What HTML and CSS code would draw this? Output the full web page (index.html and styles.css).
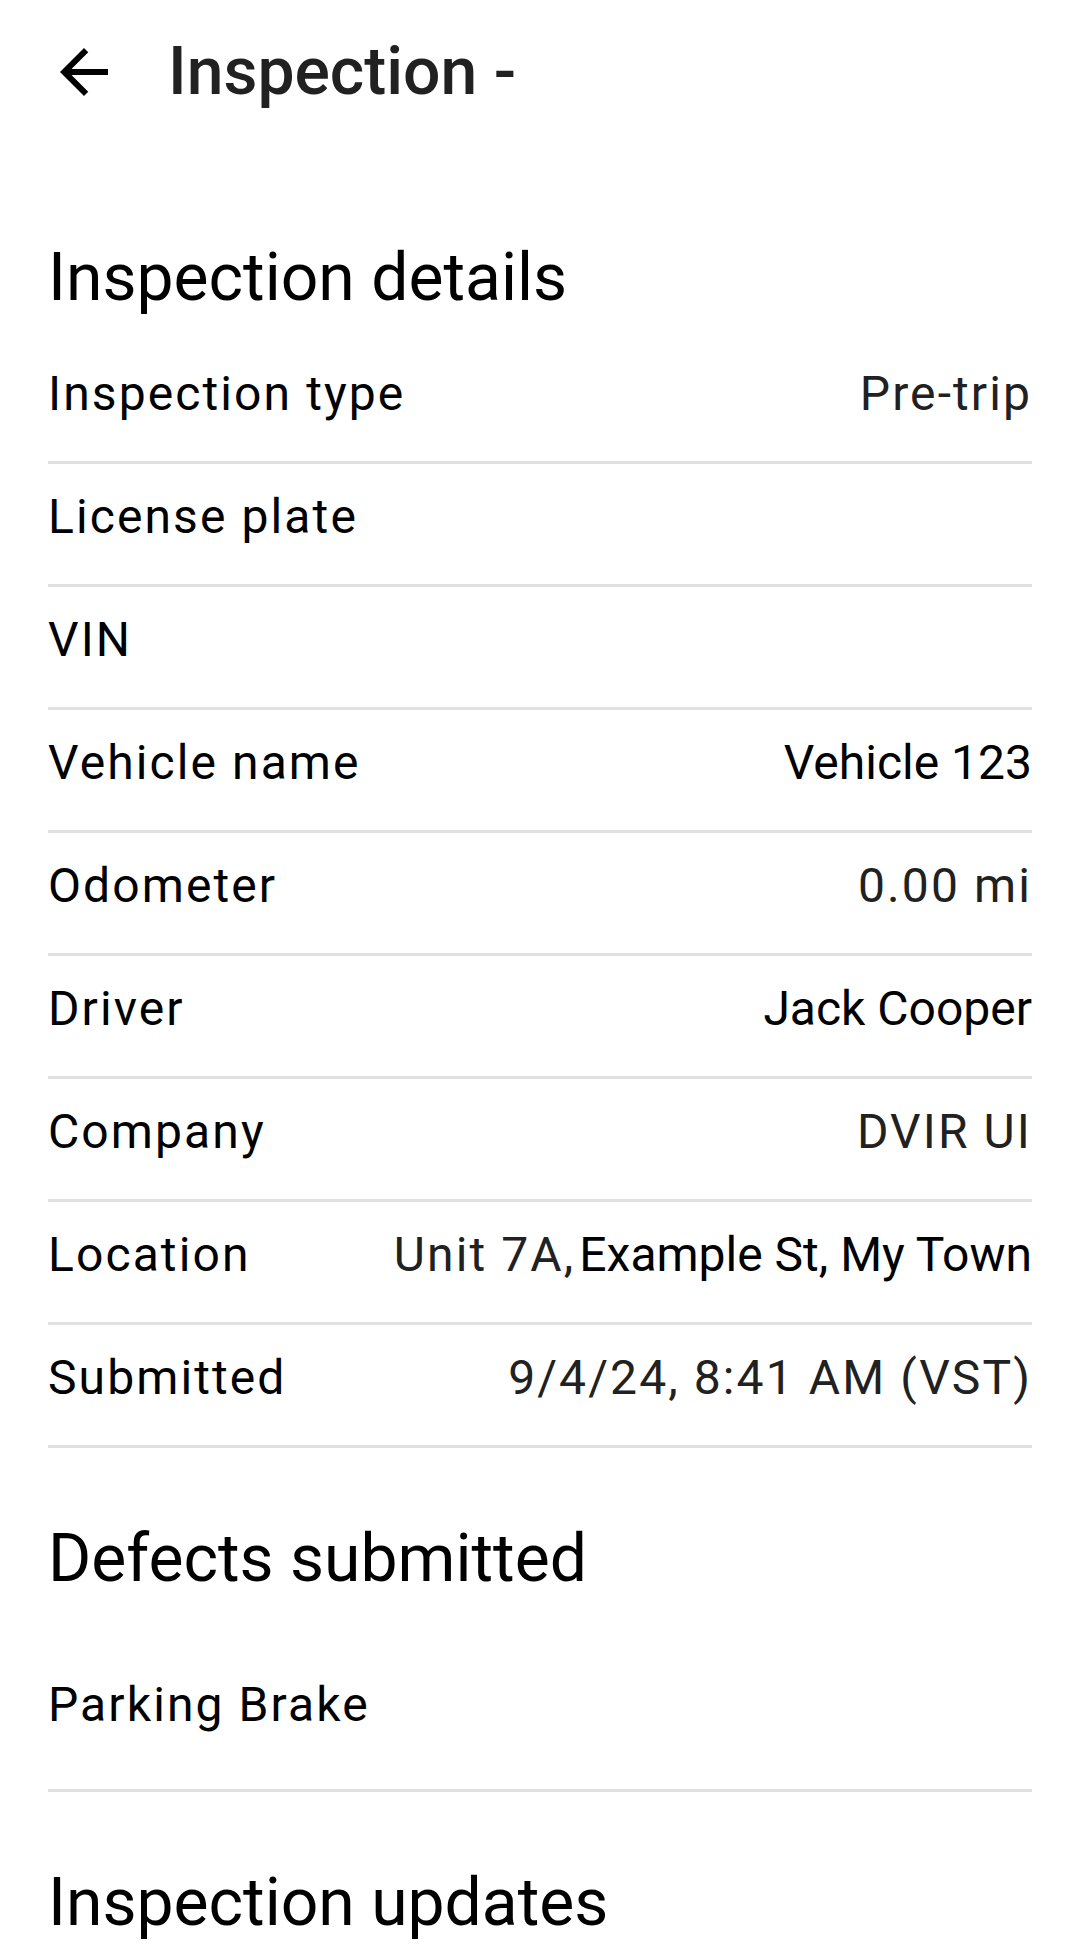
FILE: index.html
```html
<!DOCTYPE html>
<html lang="en">
<head>
<meta charset="utf-8">
<title>Inspection</title>
<link rel="stylesheet" href="styles.css">
</head>
<body>
<header class="toolbar">
  <button class="nav" aria-label="Back">
    <svg viewBox="0 0 24 24" width="72" height="72" aria-hidden="true"><path d="M20 11H7.83l5.59-5.59L12 4l-8 8 8 8 1.41-1.41L7.83 13H20v-2z"/></svg>
  </button>
  <h1 class="title">Inspection -</h1>
</header>
<main class="content">
  <section class="section">
    <h2 class="section-title first">Inspection details</h2>
    <div class="rows">
      <div class="row"><span class="label">Inspection type</span><span class="value">Pre-trip</span></div>
      <div class="row"><span class="label">License plate</span><span class="value"></span></div>
      <div class="row"><span class="label">VIN</span><span class="value"></span></div>
      <div class="row"><span class="label">Vehicle name</span><span class="value plain">Vehicle 123</span></div>
      <div class="row"><span class="label">Odometer</span><span class="value">0.00 mi</span></div>
      <div class="row"><span class="label">Driver</span><span class="value plain">Jack Cooper</span></div>
      <div class="row"><span class="label">Company</span><span class="value">DVIR UI</span></div>
      <div class="row"><span class="label">Location</span><span class="value">Unit 7A,<span class="plain addr">Example St, My Town</span></span></div>
      <div class="row"><span class="label">Submitted</span><span class="value">9/4/24, 8:41 AM (VST)</span></div>
    </div>
  </section>
  <section class="section">
    <h2 class="section-title">Defects submitted</h2>
    <div class="defect"><span class="label">Parking Brake</span></div>
  </section>
  <section class="section">
    <h2 class="section-title">Inspection updates</h2>
  </section>
</main>
</body>
</html>
```
FILE: styles.css
```css
html, body {
  margin: 0;
  padding: 0;
  background: #ffffff;
}
body {
  font-family: Roboto, "Noto Sans", "Liberation Sans", sans-serif;
  color: #000000;
}
.toolbar {
  height: 144px;
  display: flex;
  align-items: center;
  padding-left: 48px;
}
.nav {
  width: 72px;
  height: 72px;
  padding: 0;
  margin: 0;
  border: 0;
  background: transparent;
  display: flex;
  align-items: center;
  justify-content: center;
}
.nav svg {
  display: block;
  fill: #000000;
}
.title {
  margin: 0 0 0 48px;
  font-size: 66px;
  line-height: 88px;
  font-weight: 500;
  color: #212121;
}
.content {
  padding: 0 48px;
}
.section-title {
  margin: 67px 0 0 0;
  font-size: 66px;
  line-height: 88px;
  font-weight: 400;
  color: #000000;
}
.section-title.first {
  margin: 90px 0 19px 0;
}
.row {
  display: flex;
  justify-content: space-between;
  align-items: baseline;
  padding: 17px 0 31px 0;
  border-bottom: 3px solid #e0e0e0;
  height: 72px;
}
.label {
  font-size: 48px;
  line-height: 72px;
  letter-spacing: 2.1px;
  color: #000000;
  white-space: nowrap;
}
.value {
  font-size: 48px;
  line-height: 72px;
  letter-spacing: 2.1px;
  color: #212121;
  white-space: nowrap;
  text-align: right;
}
.plain {
  letter-spacing: 0;
  color: #000000;
}
.addr {
  margin-left: 4px;
}
.defect {
  padding: 66px 0 48px 0;
  height: 72px;
  display: flex;
  align-items: baseline;
  border-bottom: 3px solid #e0e0e0;
}
```
